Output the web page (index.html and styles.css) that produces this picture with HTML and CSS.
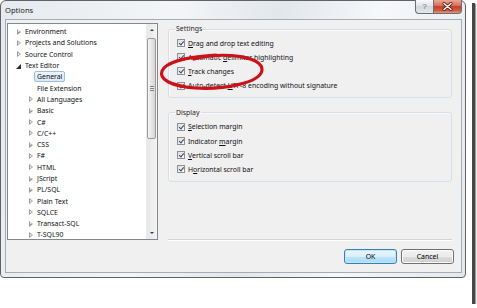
FILE: index.html
```html
<!DOCTYPE html>
<html>
  <head>
    <meta charset="utf-8">
    <meta name="viewport" content="width=device-width,initial-scale=1.0" />
    <title>Options</title>
    <link rel="stylesheet" href="styles.css">
  </head>
  <body>
    <div class="photo">
      <div class="dialog">
        <div class="titlebar">
          <span class="title">Options</span>
          <div class="caption-btns">
            <span class="cap-help">?</span>
            <span class="cap-close">
              <svg width="11" height="9" viewBox="0 0 11 9">
                <path d="M2 1.5 L9 7.5 M9 1.5 L2 7.5" stroke="#5a1a10" stroke-width="3" stroke-linecap="round"/>
                <path d="M2 1.5 L9 7.5 M9 1.5 L2 7.5" stroke="#fff" stroke-width="1.5" stroke-linecap="round"/>
              </svg>
            </span>
          </div>
        </div>

        <div class="client">
          <div class="tree">
            <ul class="nodes">
              <li class="node lvl1"><span class="exp closed"></span><span class="lbl">Environment</span></li>
              <li class="node lvl1"><span class="exp closed"></span><span class="lbl">Projects and Solutions</span></li>
              <li class="node lvl1"><span class="exp closed"></span><span class="lbl">Source Control</span></li>
              <li class="node lvl1"><span class="exp open"></span><span class="lbl">Text Editor</span></li>
              <li class="node lvl2"><span class="exp"></span><span class="lbl selected">General</span></li>
              <li class="node lvl2"><span class="exp"></span><span class="lbl">File Extension</span></li>
              <li class="node lvl2"><span class="exp closed"></span><span class="lbl">All Languages</span></li>
              <li class="node lvl2"><span class="exp closed"></span><span class="lbl">Basic</span></li>
              <li class="node lvl2"><span class="exp closed"></span><span class="lbl">C#</span></li>
              <li class="node lvl2"><span class="exp closed"></span><span class="lbl">C/C++</span></li>
              <li class="node lvl2"><span class="exp closed"></span><span class="lbl">CSS</span></li>
              <li class="node lvl2"><span class="exp closed"></span><span class="lbl">F#</span></li>
              <li class="node lvl2"><span class="exp closed"></span><span class="lbl">HTML</span></li>
              <li class="node lvl2"><span class="exp closed"></span><span class="lbl">JScript</span></li>
              <li class="node lvl2"><span class="exp closed"></span><span class="lbl">PL/SQL</span></li>
              <li class="node lvl2"><span class="exp closed"></span><span class="lbl">Plain Text</span></li>
              <li class="node lvl2"><span class="exp closed"></span><span class="lbl">SQLCE</span></li>
              <li class="node lvl2"><span class="exp closed"></span><span class="lbl">Transact-SQL</span></li>
              <li class="node lvl2"><span class="exp closed"></span><span class="lbl">T-SQL90</span></li>
            </ul>
            <div class="vscroll">
              <span class="arrow up"></span>
              <div class="thumb"><span class="grip"></span></div>
              <span class="arrow down"></span>
            </div>
          </div>

          <div class="pane">
            <fieldset class="group settings">
              <legend>Settings</legend>
              <label class="check"><span class="box"></span><span><u>D</u>rag and drop text editing</span></label>
              <label class="check"><span class="box"></span><span>Automatic <u>d</u>elimiter highlighting</span></label>
              <label class="check"><span class="box"></span><span><u>T</u>rack changes</span></label>
              <label class="check"><span class="box"></span><span>Auto-detect <u>U</u>TF-8 encoding without signature</span></label>
            </fieldset>

            <fieldset class="group display">
              <legend>Display</legend>
              <label class="check"><span class="box"></span><span><u>S</u>election margin</span></label>
              <label class="check"><span class="box"></span><span>Indicator <u>m</u>argin</span></label>
              <label class="check"><span class="box"></span><span><u>V</u>ertical scroll bar</span></label>
              <label class="check"><span class="box"></span><span>H<u>o</u>rizontal scroll bar</span></label>
            </fieldset>

            <div class="sep"></div>
            <div class="buttons">
              <button class="btn default">OK</button>
              <button class="btn">Cancel</button>
            </div>
          </div>
        </div>
      </div>

      <!-- hand drawn marker round "Track changes" -->
      <svg class="ink" width="477" height="308" viewBox="0 0 477 308">
        <path d="M194 59 C 226 51, 263 57, 262 70 C 261 83, 222 90, 195 88 C 170 86, 159 79, 162 71 C 165 63, 184 57, 216 55"
              fill="none" stroke="#cc1219" stroke-width="3.2" stroke-linecap="round"/>
      </svg>
    </div>
  </body>
</html>
```

FILE: styles.css
```css
body {
  margin: 0;
  background: #fff;
  font-family: "Noto Sans", "Open Sans", sans-serif;
  font-size: 6.9px;
  color: #111;
}

.photo {
  position: relative;
  width: 472px;
  height: 304px;
  background: #fff;
  box-shadow: 3px 3px 0 #474747, 4px 4px 1px #9a9a9a;
}

.dialog {
  box-sizing: border-box;
  width: 466px;
  height: 278px;
  display: flex;
  flex-direction: column;
  border: 1px solid #5f6368;
  border-radius: 6px 6px 4px 4px;
  background: linear-gradient(100deg, #e6eaee 0%, #f3f5f7 35%, #e2e7ec 55%, #f6f8fa 75%, #e4e9ee 100%);
}

.titlebar {
  height: 18px;
  display: flex;
  justify-content: space-between;
  align-items: flex-start;
}
.title {
  font-size: 7.6px;
  line-height: 18px;
  padding-left: 4px;
  color: #1b1b1b;
}

.caption-btns {
  display: flex;
  margin-right: 3px;
  margin-top: -1px;
}
.cap-help, .cap-close {
  box-sizing: border-box;
  height: 14px;
  display: flex;
  align-items: center;
  justify-content: center;
  border: 1px solid #6a6f75;
  border-top: none;
}
.cap-help {
  width: 18px;
  border-right: none;
  border-radius: 0 0 0 4px;
  background: linear-gradient(#f8f9fa, #dde2e7 50%, #d0d6dc 50%, #e3e8ec);
  color: #6a6f76;
  font-size: 8px;
  font-family: "Liberation Sans", sans-serif;
}
.cap-close {
  width: 29px;
  border-radius: 0 0 4px 0;
  background: linear-gradient(#e9a898, #d86c55 45%, #c7402a 50%, #cf5b3f 80%, #e29a7e);
}

.client {
  flex: 1;
  display: flex;
  margin: 0 3px 4px 4px;
  padding: 3px 7px 0 1px;
  border: 1px solid #a6acb2;
  background: #f0f0f0;
}

/* tree */
.tree {
  box-sizing: border-box;
  width: 151px;
  height: 217px;
  display: flex;
  border: 1px solid #828790;
  background: #fff;
  overflow: hidden;
}
.nodes {
  flex: 1;
  list-style: none;
  margin: 0;
  padding: 2px 0 0 0;
}
.node {
  height: 11.3px;
  line-height: 11.3px;
  display: flex;
  align-items: center;
  white-space: nowrap;
}
.lvl1 { padding-left: 6px; }
.lvl2 { padding-left: 18px; }
.exp {
  position: relative;
  width: 8px;
  height: 8px;
  flex: none;
}
.exp.closed::before, .exp.closed::after {
  content: "";
  position: absolute;
  width: 0;
  height: 0;
}
.exp.closed::before {
  left: 3px;
  top: 1px;
  border-left: 4px solid #9a9a9a;
  border-top: 3px solid transparent;
  border-bottom: 3px solid transparent;
}
.exp.closed::after {
  left: 3.8px;
  top: 2.6px;
  border-left: 2px solid #fff;
  border-top: 1.4px solid transparent;
  border-bottom: 1.4px solid transparent;
}
.exp.open::before {
  content: "";
  position: absolute;
  left: 2px;
  top: 2px;
  width: 0;
  height: 0;
  border-bottom: 5px solid #2b2b2b;
  border-left: 5px solid transparent;
}
.lbl {
  border: 1px solid transparent;
  padding: 0 2px;
  line-height: 9px;
  border-radius: 2px;
}
.lbl.selected {
  border-color: #9fbde0;
  background: linear-gradient(#eef5fd, #d9e8fa);
}

.vscroll {
  width: 10px;
  flex: none;
  position: relative;
  background: linear-gradient(to right, #e7e7e7, #f4f4f4);
  border-left: 1px solid #ececec;
}
.arrow {
  position: absolute;
  left: 3px;
  width: 0;
  height: 0;
  border-left: 2px solid transparent;
  border-right: 2px solid transparent;
}
.arrow.up {
  top: 5px;
  border-bottom: 2px solid #3a3a3a;
}
.arrow.down {
  bottom: 5px;
  border-top: 2px solid #3a3a3a;
}
.thumb {
  position: absolute;
  top: 14px;
  left: 0;
  right: 1px;
  height: 101px;
  box-sizing: border-box;
  border: 1px solid #9a9a9a;
  border-radius: 2px;
  background: linear-gradient(to right, #f6f6f6, #e4e4e4 50%, #d6d6d6);
  display: flex;
  align-items: center;
  justify-content: center;
}
.grip {
  width: 4px;
  height: 5px;
  background: repeating-linear-gradient(#7d7d7d 0 1px, #eee 1px 2px);
}

/* right pane */
.pane {
  flex: 1;
  display: flex;
  flex-direction: column;
  margin-left: 10px;
}
.group {
  margin: 1px 2px 0 0;
  padding: 2px 0 4px 8px;
  border: 1px solid #d5dfe5;
  border-radius: 3px;
  box-shadow: inset 1px 1px 0 #fbfbfb;
}
.group.display {
  margin-top: 10px;
}
.group legend {
  margin-left: -2px;
  padding: 0 1px;
  line-height: 10px;
  color: #1e1e1e;
}
.check {
  height: 14.2px;
  display: flex;
  align-items: center;
  gap: 3px;
  white-space: nowrap;
}
.box {
  box-sizing: border-box;
  width: 8px;
  height: 8px;
  border: 1px solid #8e8f8f;
  background: linear-gradient(135deg, #dcdcdc, #fbfbfb);
  position: relative;
}
.box::after {
  content: "";
  position: absolute;
  left: 1.6px;
  top: 0;
  width: 1.6px;
  height: 4px;
  border-right: 1.3px solid #2e4573;
  border-bottom: 1.3px solid #2e4573;
  transform: rotate(40deg);
}
.check u {
  text-underline-offset: 1px;
}

.sep {
  margin: auto 2px 0 0;
  height: 1px;
  background: #d4d4d4;
  border-bottom: 1px solid #fff;
}
.buttons {
  display: flex;
  justify-content: flex-end;
  gap: 4px;
  margin: 8px 0 8px 0;
}
.btn {
  box-sizing: border-box;
  width: 53px;
  height: 15px;
  padding: 0;
  font: inherit;
  color: #000;
  border: 1px solid #707070;
  border-radius: 3px;
  background: linear-gradient(#f2f2f2, #ebebeb 50%, #dddddd 50%, #cfcfcf);
  box-shadow: inset 0 0 0 1px #fcfcfc;
}
.btn.default {
  border-color: #3c7fb1;
  background: linear-gradient(#eaf6fd, #d9f0fc 50%, #bee6fd 50%, #a7d9f5);
  box-shadow: inset 0 0 0 1px #bfe7fb;
}

.ink {
  position: absolute;
  top: 0;
  left: 0;
  pointer-events: none;
}
```
